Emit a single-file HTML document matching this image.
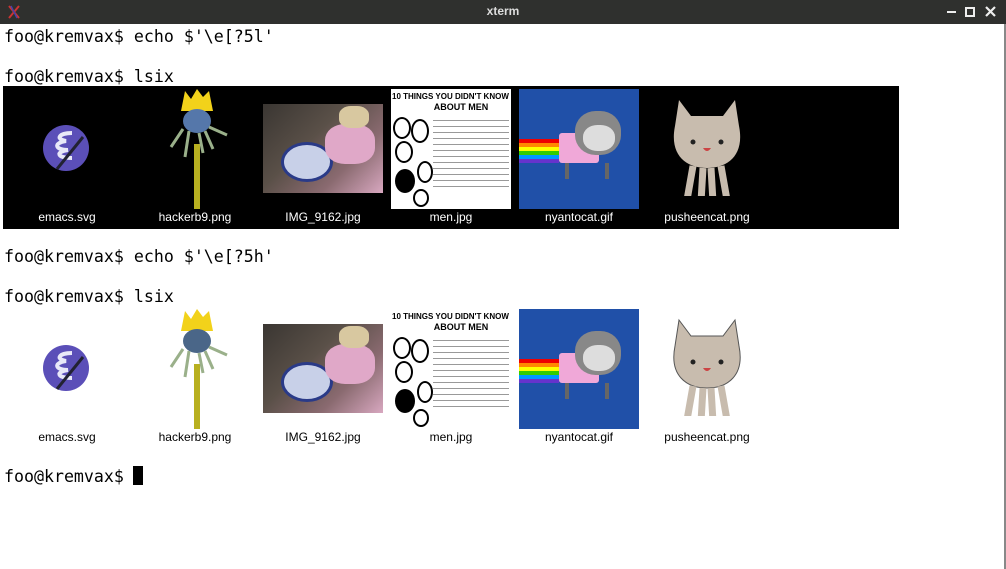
<!DOCTYPE html>
<html><head><style>
body{margin:0;width:1006px;height:569px;overflow:hidden;background:#fff;position:relative;font-family:"DejaVu Sans Mono","Liberation Mono",monospace}
.tb{position:absolute;left:0;top:0;width:1006px;height:24px;background:#2f302e}
.tb .t{position:absolute;left:0;width:1006px;top:4px;text-align:center;color:#ddd;font:bold 12px "Liberation Sans",sans-serif}
.ln{position:absolute;left:4px;font-size:16.6px;color:#000;white-space:pre;line-height:20px}
.blk{position:absolute;left:3px;width:896px;height:143px}
.lab{position:absolute;width:128px;text-align:center;font:12px "Liberation Sans",sans-serif}
.im{position:absolute}
.bd{position:absolute;right:0;top:24px;width:2px;height:545px;background:#888}
.mt{font:bold 8px 'Liberation Sans',sans-serif;white-space:nowrap}
</style></head><body>
<div class="tb"><svg style="position:absolute;left:6px;top:4px" width="16" height="16"><path d="M3 2 L13 14 M13 2 L3 14" stroke="#c33" stroke-width="2"/><path d="M5 2 L11 14" stroke="#44a" stroke-width="1.5"/></svg><div class="t">xterm</div>
<div style="position:absolute;left:947px;top:11px;width:9px;height:2px;background:#eee"></div>
<div style="position:absolute;left:965px;top:7px;width:6px;height:6px;border:2px solid #eee"></div>
<svg style="position:absolute;left:985px;top:6px" width="11" height="11"><path d="M1 1L10 10M10 1L1 10" stroke="#eee" stroke-width="2.2"/></svg>
</div>
<div class="bd"></div>
<div class="ln" style="top:27px">foo@kremvax$ echo $'\e[?5l'</div>
<div class="ln" style="top:67px">foo@kremvax$ lsix</div>
<div class="ln" style="top:247px">foo@kremvax$ echo $'\e[?5h'</div>
<div class="ln" style="top:287px">foo@kremvax$ lsix</div>
<div class="ln" style="top:467px">foo@kremvax$ </div>
<div style="position:absolute;left:133px;top:466px;width:10px;height:19px;background:#000"></div>

<!-- block 1 -->
<div class="blk" style="top:86px;background:#000;color:#fff">
 <svg class="im" style="left:38px;top:37px" width="50" height="50"><circle cx="25" cy="25" r="23" fill="#5b4fb8"/><path d="M31 10 C18 10 14 16 25 18 C12 20 14 27 27 27 C14 29 16 35 31 35" stroke="#e8e8f8" stroke-width="4" fill="none"/><path d="M42 14 L16 46" stroke="#223" stroke-width="3"/></svg>
 <svg class="im" style="left:160px;top:3px" width="70" height="120"><rect x="31" y="55" width="6" height="65" fill="#b8b020"/><path d="M18 22 L22 2 L28 10 L34 0 L40 8 L46 2 L50 22 Z" fill="#f2d21a"/><ellipse cx="34" cy="32" rx="14" ry="12" fill="#5577aa"/><path d="M20 40 L8 58 M26 42 L22 68 M42 42 L50 60 M46 38 L64 46 M36 44 L40 64" stroke="#9ab08a" stroke-width="3"/></svg>
 <div class="im" style="left:260px;top:18px;width:120px;height:89px;background:linear-gradient(135deg,#3a3632,#5a5048 40%,#8a6a70 70%,#d8a8c0)"><div style="position:absolute;left:18px;top:38px;width:46px;height:34px;border-radius:50%;background:#c8d0e8;border:3px solid #2a3a88"></div><div style="position:absolute;left:62px;top:20px;width:50px;height:40px;border-radius:40%;background:#e0a8c8"></div><div style="position:absolute;left:76px;top:2px;width:30px;height:22px;border-radius:40%;background:#d8c8a0"></div></div>
 <div class="im" style="left:388px;top:3px;width:120px;height:120px;background:#fff;color:#000;overflow:hidden"><div class="mt" style="padding:3px 1px 1px">10 THINGS YOU DIDN'T KNOW</div><div class="mt" style="font-size:9px;text-align:center;padding-left:20px">ABOUT MEN</div><div style="position:absolute;left:42px;top:28px;width:76px;height:72px;background:repeating-linear-gradient(#fff 0 3px,#999 3px 4px,#fff 4px 6px)"></div><div style="position:absolute;left:2px;top:28px;width:14px;height:18px;border:2px solid #000;border-radius:50%"></div><div style="position:absolute;left:20px;top:30px;width:14px;height:20px;border:2px solid #000;border-radius:50%"></div><div style="position:absolute;left:4px;top:52px;width:14px;height:18px;border:2px solid #000;border-radius:50%"></div><div style="position:absolute;left:4px;top:80px;width:20px;height:24px;background:#000;border-radius:50%"></div><div style="position:absolute;left:26px;top:72px;width:12px;height:18px;border:2px solid #000;border-radius:50%"></div><div style="position:absolute;left:22px;top:100px;width:12px;height:14px;border:2px solid #000;border-radius:50%"></div></div>
 <div class="im" style="left:516px;top:3px;width:120px;height:120px;background:#2050a8;overflow:hidden"><div style="position:absolute;left:0;top:50px;width:40px;height:24px;background:linear-gradient(#e00 0 16%,#f80 16% 33%,#ff0 33% 50%,#3c0 50% 66%,#09f 66% 83%,#63c 83%)"></div><div style="position:absolute;left:40px;top:44px;width:40px;height:30px;background:#f0a8d8;border-radius:3px"></div><div style="position:absolute;left:56px;top:22px;width:46px;height:44px;background:#888;border-radius:45%"></div><div style="position:absolute;left:64px;top:36px;width:32px;height:26px;background:#ddd;border-radius:45%"></div><div style="position:absolute;left:46px;top:74px;width:36px;height:16px;border-left:4px solid #666;border-right:4px solid #666"></div></div>
 <svg class="im" style="left:654px;top:10px" width="100" height="100"><path d="M22 4 L34 20 L66 20 L78 4 L82 30 C88 60 70 72 50 72 C30 72 12 60 18 30 Z" fill="#c8bcae"/><path d="M36 70 L30 104 M46 72 L44 106 M54 72 L56 106 M64 70 L70 104" stroke="#c8bcae" stroke-width="7"/><circle cx="36" cy="46" r="2.5" fill="#222"/><circle cx="64" cy="46" r="2.5" fill="#222"/><path d="M46 52 Q50 58 54 52" fill="#c44"/></svg>
 <div class="lab" style="left:0;top:124px">emacs.svg</div><div class="lab" style="left:128px;top:124px">hackerb9.png</div><div class="lab" style="left:256px;top:124px">IMG_9162.jpg</div><div class="lab" style="left:384px;top:124px">men.jpg</div><div class="lab" style="left:512px;top:124px">nyantocat.gif</div><div class="lab" style="left:640px;top:124px">pusheencat.png</div>
</div>

<!-- block 2 -->
<div class="blk" style="top:306px;color:#000">
 <svg class="im" style="left:38px;top:37px" width="50" height="50"><circle cx="25" cy="25" r="23" fill="#5b4fb8"/><path d="M31 10 C18 10 14 16 25 18 C12 20 14 27 27 27 C14 29 16 35 31 35" stroke="#e8e8f8" stroke-width="4" fill="none"/><path d="M42 14 L16 46" stroke="#223" stroke-width="3"/></svg>
 <svg class="im" style="left:160px;top:3px" width="70" height="120"><rect x="31" y="55" width="6" height="65" fill="#b8b020"/><path d="M18 22 L22 2 L28 10 L34 0 L40 8 L46 2 L50 22 Z" fill="#f2d21a"/><ellipse cx="34" cy="32" rx="14" ry="12" fill="#4a6688"/><path d="M20 40 L8 58 M26 42 L22 68 M42 42 L50 60 M46 38 L64 46 M36 44 L40 64" stroke="#9ab08a" stroke-width="3"/></svg>
 <div class="im" style="left:260px;top:18px;width:120px;height:89px;background:linear-gradient(135deg,#3a3632,#5a5048 40%,#8a6a70 70%,#d8a8c0)"><div style="position:absolute;left:18px;top:38px;width:46px;height:34px;border-radius:50%;background:#c8d0e8;border:3px solid #2a3a88"></div><div style="position:absolute;left:62px;top:20px;width:50px;height:40px;border-radius:40%;background:#e0a8c8"></div><div style="position:absolute;left:76px;top:2px;width:30px;height:22px;border-radius:40%;background:#d8c8a0"></div></div>
 <div class="im" style="left:388px;top:3px;width:120px;height:120px;background:#fff;color:#000;overflow:hidden"><div class="mt" style="padding:3px 1px 1px">10 THINGS YOU DIDN'T KNOW</div><div class="mt" style="font-size:9px;text-align:center;padding-left:20px">ABOUT MEN</div><div style="position:absolute;left:42px;top:28px;width:76px;height:72px;background:repeating-linear-gradient(#fff 0 3px,#999 3px 4px,#fff 4px 6px)"></div><div style="position:absolute;left:2px;top:28px;width:14px;height:18px;border:2px solid #000;border-radius:50%"></div><div style="position:absolute;left:20px;top:30px;width:14px;height:20px;border:2px solid #000;border-radius:50%"></div><div style="position:absolute;left:4px;top:52px;width:14px;height:18px;border:2px solid #000;border-radius:50%"></div><div style="position:absolute;left:4px;top:80px;width:20px;height:24px;background:#000;border-radius:50%"></div><div style="position:absolute;left:26px;top:72px;width:12px;height:18px;border:2px solid #000;border-radius:50%"></div><div style="position:absolute;left:22px;top:100px;width:12px;height:14px;border:2px solid #000;border-radius:50%"></div></div>
 <div class="im" style="left:516px;top:3px;width:120px;height:120px;background:#2050a8;overflow:hidden"><div style="position:absolute;left:0;top:50px;width:40px;height:24px;background:linear-gradient(#e00 0 16%,#f80 16% 33%,#ff0 33% 50%,#3c0 50% 66%,#09f 66% 83%,#63c 83%)"></div><div style="position:absolute;left:40px;top:44px;width:40px;height:30px;background:#f0a8d8;border-radius:3px"></div><div style="position:absolute;left:56px;top:22px;width:46px;height:44px;background:#888;border-radius:45%"></div><div style="position:absolute;left:64px;top:36px;width:32px;height:26px;background:#ddd;border-radius:45%"></div><div style="position:absolute;left:46px;top:74px;width:36px;height:16px;border-left:4px solid #666;border-right:4px solid #666"></div></div>
 <svg class="im" style="left:654px;top:10px" width="100" height="100"><path d="M22 4 L34 20 L66 20 L78 4 L82 30 C88 60 70 72 50 72 C30 72 12 60 18 30 Z" fill="#c8bcae" stroke="#555" stroke-width="1"/><path d="M36 70 L30 104 M46 72 L44 106 M54 72 L56 106 M64 70 L70 104" stroke="#c8bcae" stroke-width="7"/><circle cx="36" cy="46" r="2.5" fill="#222"/><circle cx="64" cy="46" r="2.5" fill="#222"/><path d="M46 52 Q50 58 54 52" fill="#c44"/></svg>
 <div class="lab" style="left:0;top:124px">emacs.svg</div><div class="lab" style="left:128px;top:124px">hackerb9.png</div><div class="lab" style="left:256px;top:124px">IMG_9162.jpg</div><div class="lab" style="left:384px;top:124px">men.jpg</div><div class="lab" style="left:512px;top:124px">nyantocat.gif</div><div class="lab" style="left:640px;top:124px">pusheencat.png</div>
</div>
</body></html>
